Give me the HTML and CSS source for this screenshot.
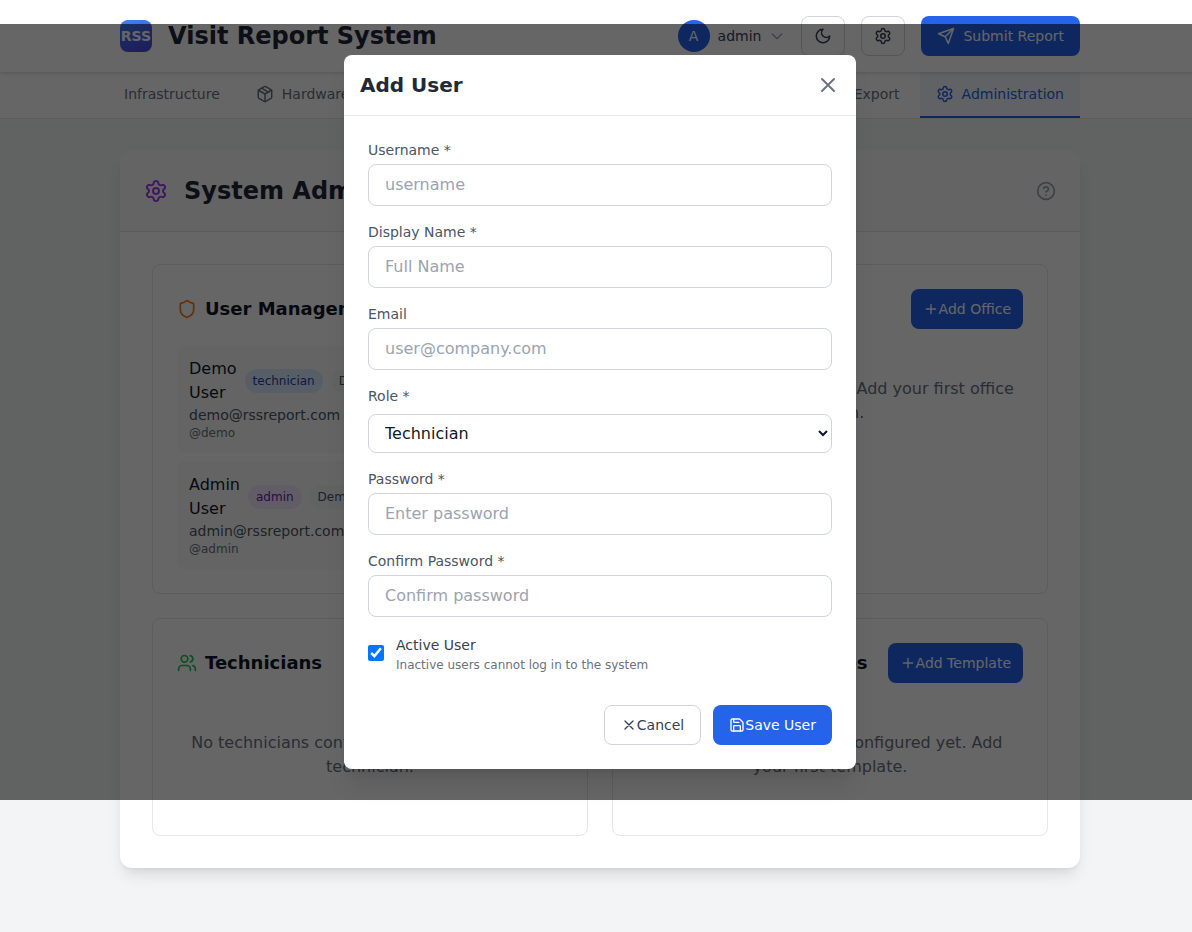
FILE: index.html
```html
<!DOCTYPE html>
<html lang="en">
<head>
<meta charset="utf-8">
<title>Visit Report System</title>
<link rel="stylesheet" href="styles.css">
</head>
<body>
<svg class="sprite" aria-hidden="true">
  <symbol id="gear" viewBox="0 0 24 24"><path d="M9.671 4.136a2.34 2.34 0 0 1 4.659 0 2.34 2.34 0 0 0 3.319 1.915 2.34 2.34 0 0 1 2.33 4.033 2.34 2.34 0 0 0 0 3.831 2.34 2.34 0 0 1-2.33 4.033 2.34 2.34 0 0 0-3.319 1.915 2.34 2.34 0 0 1-4.659 0 2.34 2.34 0 0 0-3.32-1.915 2.34 2.34 0 0 1-2.33-4.033 2.34 2.34 0 0 0 0-3.831A2.34 2.34 0 0 1 6.35 6.051a2.34 2.34 0 0 0 3.319-1.915"/><circle cx="12" cy="12" r="3"/></symbol>
  <symbol id="moon" viewBox="0 0 24 24"><path d="M12 3a6 6 0 0 0 9 9 9 9 0 1 1-9-9Z"/></symbol>
  <symbol id="send" viewBox="0 0 24 24"><path d="m22 2-7 20-4-9-9-4Z"/><path d="M22 2 11 13"/></symbol>
  <symbol id="chevron" viewBox="0 0 24 24"><path d="m5 9 7 7 7-7"/></symbol>
  <symbol id="package" viewBox="0 0 24 24"><path d="m7.5 4.27 9 5.15"/><path d="M21 8a2 2 0 0 0-1-1.73l-7-4a2 2 0 0 0-2 0l-7 4A2 2 0 0 0 3 8v8a2 2 0 0 0 1 1.73l7 4a2 2 0 0 0 2 0l7-4A2 2 0 0 0 21 16Z"/><path d="m3.3 7 8.7 5 8.7-5M12 22V12"/></symbol>
  <symbol id="help" viewBox="0 0 24 24"><circle cx="12" cy="12" r="10"/><path d="M9.09 9a3 3 0 0 1 5.83 1c0 2-3 3-3 3M12 17h.01"/></symbol>
  <symbol id="shield" viewBox="0 0 24 24"><path d="M20 13c0 5-3.5 7.5-7.66 8.95a1 1 0 0 1-.67-.01C7.5 20.5 4 18 4 13V6a1 1 0 0 1 1-1c2 0 4.500-1.200 6.240-2.720a1.170 1.170 0 0 1 1.520 0C14.510 3.810 17 5 19 5a1 1 0 0 1 1 1z"/></symbol>
  <symbol id="users" viewBox="0 0 24 24"><path d="M16 21v-2a4 4 0 0 0-4-4H6a4 4 0 0 0-4 4v2"/><circle cx="9" cy="7" r="4"/><path d="M22 21v-2a4 4 0 0 0-3-3.870M16 3.130a4 4 0 0 1 0 7.750"/></symbol>
  <symbol id="plus" viewBox="0 0 24 24"><path d="M5 12h14M12 5v14"/></symbol>
  <symbol id="close" viewBox="0 0 24 24"><path d="M18 6 6 18M6 6l12 12"/></symbol>
  <symbol id="save" viewBox="0 0 24 24"><path d="M15.200 3a2 2 0 0 1 1.400.600l3.800 3.800a2 2 0 0 1 .600 1.400V19a2 2 0 0 1-2 2H5a2 2 0 0 1-2-2V5a2 2 0 0 1 2-2z"/><path d="M17 21v-7a1 1 0 0 0-1-1H8a1 1 0 0 0-1 1v7M7 3v4a1 1 0 0 0 1 1h7"/></symbol>
</svg>

<header class="topbar">
  <div class="container topbar-row">
    <div class="brand"><span class="logo">RSS</span><h1 class="brand-name">Visit Report System</h1></div>
    <div class="actions">
      <div class="account"><span class="avatar">A</span><span>admin</span><svg class="icon icon-16 muted"><use href="#chevron"/></svg></div>
      <button class="btn btn-square"><svg class="icon icon-18"><use href="#moon"/></svg></button>
      <button class="btn btn-square"><svg class="icon icon-18"><use href="#gear"/></svg></button>
      <button class="btn btn-primary btn-submit"><svg class="icon icon-18"><use href="#send"/></svg>Submit Report</button>
    </div>
  </div>
</header>

<nav class="tabs">
  <div class="container tabs-row">
    <a class="tab tab-cut">Infrastructure</a>
    <a class="tab"><svg class="icon icon-18"><use href="#package"/></svg>Hardware</a>
    <a class="tab tab-end">Export</a>
    <a class="tab tab-active"><svg class="icon icon-18"><use href="#gear"/></svg>Administration</a>
  </div>
</nav>

<main class="container main">
  <section class="panel">
    <div class="panel-head">
      <svg class="icon icon-24 purple"><use href="#gear"/></svg>
      <h2 class="panel-title">System Administration</h2>
      <svg class="icon icon-20 help"><use href="#help"/></svg>
    </div>
    <div class="panel-grid">
      <article class="card">
        <div class="card-head"><svg class="icon icon-20 orange"><use href="#shield"/></svg><h3 class="card-title">User Management</h3></div>
        <div class="user-list">
          <div class="user">
            <div class="user-line"><span class="user-name">Demo User</span><span class="badge badge-blue">technician</span><span class="badge badge-gray">Demo</span></div>
            <div class="user-email">demo@rssreport.com</div>
            <div class="user-handle">@demo</div>
          </div>
          <div class="user">
            <div class="user-line"><span class="user-name">Admin User</span><span class="badge badge-purple">admin</span><span class="badge badge-gray">Demo</span></div>
            <div class="user-email">admin@rssreport.com</div>
            <div class="user-handle">@admin</div>
          </div>
        </div>
      </article>
      <article class="card">
        <div class="card-head"><h3 class="card-title">Offices</h3><button class="btn btn-primary btn-add"><svg class="icon icon-16"><use href="#plus"/></svg>Add Office</button></div>
        <p class="empty">No offices configured yet. Add your first office location.</p>
      </article>
      <article class="card">
        <div class="card-head"><svg class="icon icon-20 green"><use href="#users"/></svg><h3 class="card-title">Technicians</h3></div>
        <p class="empty">No technicians configured yet. Add your first technician.</p>
      </article>
      <article class="card">
        <div class="card-head"><h3 class="card-title title-end">Checklist Templates</h3><button class="btn btn-primary btn-add"><svg class="icon icon-16"><use href="#plus"/></svg>Add Template</button></div>
        <p class="empty">No checklist templates configured yet. Add your first template.</p>
      </article>
    </div>
  </section>
</main>

<div class="overlay">
  <form class="modal">
    <div class="modal-head"><h2 class="modal-title">Add User</h2><svg class="icon icon-24 close"><use href="#close"/></svg></div>
    <div class="modal-body">
      <label class="field"><span>Username *</span><input class="input" type="text" placeholder="username"></label>
      <label class="field"><span>Display Name *</span><input class="input" type="text" placeholder="Full Name"></label>
      <label class="field"><span>Email</span><input class="input" type="email" placeholder="user@company.com"></label>
      <label class="field field-select"><span>Role *</span><select class="input select"><option>Technician</option></select></label>
      <label class="field"><span>Password *</span><input class="input" type="password" placeholder="Enter password"></label>
      <label class="field"><span>Confirm Password *</span><input class="input" type="password" placeholder="Confirm password"></label>
      <label class="check-row"><input class="check" type="checkbox" checked><span class="check-text"><span>Active User</span><small class="hint">Inactive users cannot log in to the system</small></span></label>
      <div class="modal-actions">
        <button type="button" class="btn btn-outline"><svg class="icon icon-16"><use href="#close"/></svg>Cancel</button>
        <button type="button" class="btn btn-primary"><svg class="icon icon-16"><use href="#save"/></svg>Save User</button>
      </div>
    </div>
  </form>
</div>
</body>
</html>
```

FILE: styles.css
```css
*, *::before, *::after { box-sizing: border-box; }
html { overflow: hidden; background: #f3f4f6; }
body { position: relative; width: 1200px; margin: 0; min-height: 932px; color: #111827; font: 16px/24px "DejaVu Sans", sans-serif; }
h1, h2, h3, p { margin: 0; }
button, input, select { font: inherit; }
.sprite { display: none; }
.icon { flex: none; fill: none; stroke: currentColor; stroke-width: 2; stroke-linecap: round; stroke-linejoin: round; }
.icon-16 { width: 16px; height: 16px; }
.icon-18 { width: 18px; height: 18px; }
.icon-20 { width: 20px; height: 20px; }
.icon-24 { width: 24px; height: 24px; }
.muted { color: #9ca3af; }
.purple { color: #a03df0; }
.orange { color: #f97316; }
.green { color: #22c55e; }
.container { width: 960px; margin: 0 auto; }

.topbar { position: relative; z-index: 1; background: #fff; box-shadow: 0 1px 3px rgba(0, 0, 0, .1), 0 2px 6px rgba(0, 0, 0, .06); }
.topbar-row { display: flex; justify-content: space-between; align-items: center; height: 72px; }
.brand { display: flex; align-items: center; gap: 16px; }
.logo { display: grid; place-items: center; width: 32px; height: 32px; border-radius: 8px; background: linear-gradient(160deg, #3b82f6, #4f46e5); color: #fff; font-size: 14px; font-weight: 700; }
.brand-name { font-size: 24px; line-height: 32px; color: #1f2937; }
.actions { display: flex; align-items: center; gap: 16px; }
.account { display: flex; align-items: center; gap: 8px; font-size: 14px; color: #374151; }
.avatar { display: grid; place-items: center; width: 32px; height: 32px; border-radius: 50%; background: #2563eb; color: #fff; }
.btn { display: inline-flex; align-items: center; justify-content: center; height: 40px; padding: 0 16px; border: 0; border-radius: 8px; font-size: 14px; line-height: 20px; white-space: nowrap; }
.btn-square { width: 44px; padding: 0; border: 1px solid #d1d5db; background: #fff; color: #374151; }
.btn-primary { background: #2563eb; color: #fff; }
.btn-submit { gap: 8px; }
.btn-add { padding: 0 12px; margin-left: auto; }
.btn-outline { border: 1px solid #d1d5db; background: #fff; color: #374151; }

.tabs { background: #fff; border-bottom: 1px solid #e5e7eb; }
.tabs-row { display: flex; gap: 4px; height: 46px; overflow: hidden; }
.tab { display: flex; align-items: center; gap: 8px; padding: 0 16px; border-bottom: 2px solid transparent; font-size: 14px; color: #6b7280; }
.tab-cut { padding-left: 4px; }
.tab-end { margin-left: auto; }
.tab-active { background: #eff6ff; color: #2563eb; border-color: #2563eb; }

.main { padding-top: 32px; }
.panel { background: #fff; border-radius: 12px; box-shadow: 0 10px 15px -3px rgba(0, 0, 0, .1), 0 4px 6px -4px rgba(0, 0, 0, .1); }
.panel-head { display: flex; align-items: center; gap: 16px; height: 81px; padding: 0 24px; border-bottom: 1px solid #e5e7eb; border-radius: 12px 12px 0 0; background: #fafafa; }
.panel-title { font-size: 24px; line-height: 32px; color: #1f2937; }
.help { margin-left: auto; color: #9ca3af; }
.panel-grid { display: grid; grid-template-columns: 1fr 1fr; gap: 24px; padding: 32px; }
.card { min-width: 0; padding: 24px; border: 1px solid #e5e7eb; border-radius: 8px; }
.card-head { display: flex; align-items: center; gap: 8px; height: 40px; margin-bottom: 16px; }
.card-title { font-size: 18px; line-height: 28px; }
.title-end { margin-left: auto; }
.title-end + .btn-add { margin-left: 12px; }
.user-list { display: grid; gap: 8px; }
.user { padding: 12px; border-radius: 8px; background: #f9fafb; }
.user-line { display: flex; align-items: center; gap: 8px; }
.user-name { width: min-content; }
.badge { padding: 4px 8px; border-radius: 12px; font-size: 12px; line-height: 16px; }
.badge-blue { background: #dbeafe; color: #1e40af; }
.badge-purple { background: #f3e8ff; color: #6b21a8; }
.badge-gray { background: #f3f4f6; color: #4b5563; }
.user-email { font-size: 14px; line-height: 20px; color: #4b5563; }
.user-handle { font-size: 12px; line-height: 16px; color: #6b7280; }
.empty { padding: 32px 0; text-align: center; color: #6b7280; }

.overlay { position: absolute; z-index: 2; top: 24px; left: 0; right: 0; height: 776px; display: flex; justify-content: center; align-items: center; background: rgba(0, 0, 0, .6); }
.modal { width: 512px; border-radius: 8px; background: #fff; box-shadow: 0 20px 25px -5px rgba(0, 0, 0, .1), 0 8px 10px -6px rgba(0, 0, 0, .1); }
.modal-head { display: flex; justify-content: space-between; align-items: center; padding: 16px; height: 61px; border-bottom: 1px solid #e5e7eb; }
.modal-title { font-size: 20px; line-height: 28px; color: #1f2937; }
.close { color: #6b7280; }
.modal-body { display: grid; gap: 16px; padding: 24px; }
.field { display: grid; gap: 4px; font-size: 14px; line-height: 20px; color: #4b5563; }
.field-select { gap: 8px; }
.input { width: 100%; height: 42px; padding: 7px 16px 9px; border: 1px solid #d1d5db; border-radius: 8px; background: #fff; color: #111827; font-size: 16px; line-height: 24px; }
.input::placeholder { color: #9ca3af; }
.select { height: 39px; padding: 0 0 0 12px; }
.check-row { display: flex; align-items: center; gap: 12px; height: 40px; font-size: 14px; line-height: 20px; color: #374151; }
.check { width: 16px; height: 16px; margin: 0; }
.check-text { display: grid; gap: 2px; padding-top: 2px; }
.hint { font-size: 12px; line-height: 16px; color: #6b7280; }
.modal-actions { display: flex; justify-content: flex-end; gap: 12px; padding-top: 16px; }
```
